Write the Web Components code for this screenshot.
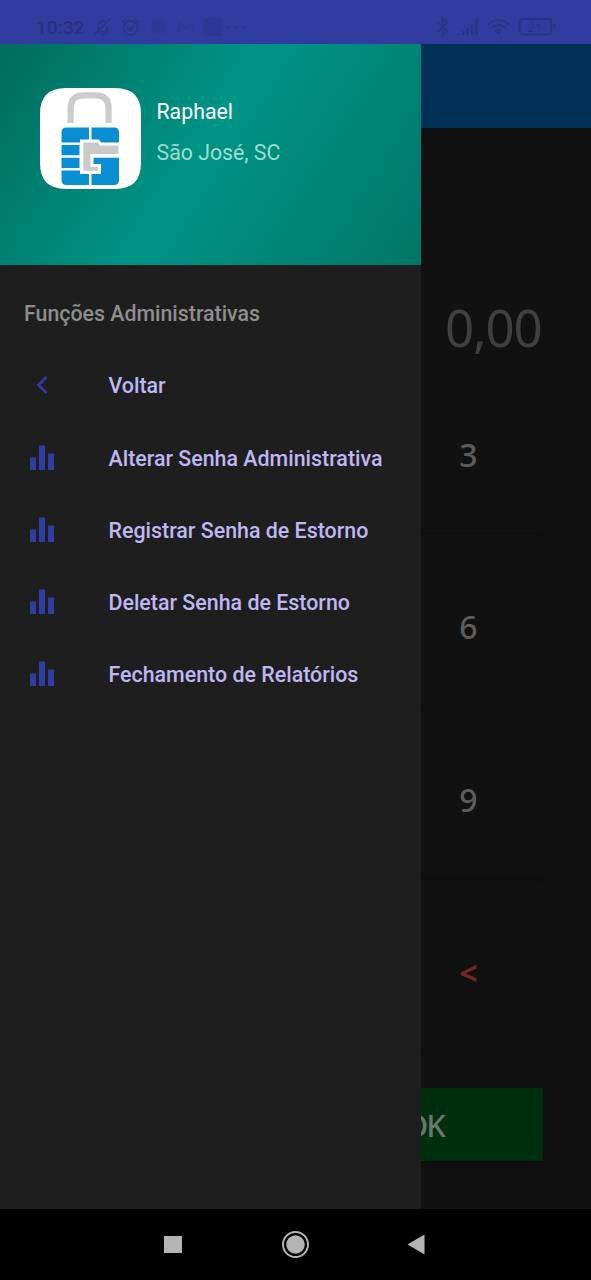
<!DOCTYPE html>
<html lang="pt-BR">
<head>
<meta charset="utf-8">
<title>Funções Administrativas</title>
<style>
html,body{margin:0;height:100%;background:#000;overflow:hidden}
body{font-family:Roboto,"Noto Sans",sans-serif}
</style>
</head>
<body>
<phone-screen></phone-screen>
<script>
const define=(name,html)=>customElements.define(name,class extends HTMLElement{
  constructor(){super();const t=document.createElement('template');t.innerHTML=html;
    this.attachShadow({mode:'open'}).append(t.content.cloneNode(true));}
});

define('status-bar',`<style>
:host{display:flex;box-sizing:border-box;height:44px;padding:10px 35px 0 36px;background:#303c9f;color:#2a3388;align-items:center;justify-content:space-between}
.g{display:flex;align-items:center}
.time{font-size:19px;font-weight:500;letter-spacing:.1px;line-height:34px;width:56px;padding-top:1px;color:#28307f}
svg{display:block}
</style>
<div class="g"><span class="time">10:32</span>
<svg width="155" height="24" viewBox="92 15 155 24" fill="none" stroke="currentColor" stroke-width="1.6">
<path d="M96 32h13M98.500 31v-5a4.500 4.500 0 0 1 8-3M107 26v6M101 34.500h4M94 35l17-17"/>
<circle cx="130.500" cy="28" r="7"/><path d="M127 27l3 3 4-4M122 23l4-4M139 23l-4-4"/>
<g stroke="none" fill="currentColor" opacity=".32"><circle cx="158" cy="27" r="7.500"/><path d="M178 22h3v10h-3zM191 22h3v10h-3zM181 22l5 5 5-5v3l-5 5-5-5z"/></g>
<rect x="203.500" y="18" width="19" height="18" rx="3" fill="currentColor" stroke="none" opacity=".48"/>
<circle cx="213" cy="27" r="4.500" stroke="#303c9f" opacity=".3"/>
<g stroke="none" fill="currentColor" opacity=".65"><circle cx="228" cy="27" r="1.300"/><circle cx="236" cy="27" r="1.300"/><circle cx="244" cy="27" r="1.300"/></g>
</svg></div>
<svg width="120" height="24" viewBox="436 15 120 24" fill="none" stroke="currentColor" stroke-width="1.500">
<path d="M438 22.500l9 9-4.500 4v-17l4.500 4-9 9"/>
<path d="M458.500 35v-2M463 35v-4M467.500 35v-7M472 35v-10M476.500 35V19" stroke-width="2.400"/>
<path d="M488 24.500q10.500-9 21 0M491.500 28q7-6 14 0M495 31q3.500-3 7 0" stroke-width="2"/><path d="M495.500 31.500h6l-3 3z" fill="currentColor" stroke="none"/>
<rect x="519.500" y="19" width="32" height="15.500" rx="4" stroke-width="2"/><path d="M554.500 24v5" stroke-width="2"/>
<text x="535.500" y="31.500" text-anchor="middle" font-family="Roboto,sans-serif" font-size="13" letter-spacing=".5" fill="currentColor" stroke="none">21</text>
</svg>`);

define('brand-logo',`<style>:host{display:block;width:101px;height:101px}svg{display:block}</style>
<svg width="101" height="101" viewBox="0 0 101 101"><path d="M0 26Q0 0 26 0h49q26 0 26 26v49q0 26-26 26H26Q0 101 0 75z" fill="#fff"/>
<path d="M30.600 35V20.300q0-13 13-13h12q13 0 13 13V35" fill="none" stroke="#ccc" stroke-width="6.200"/>
<g fill="#088fd3"><path d="M26.500 39.500H49v12h-9v3H21.500v-10q0-5 5-5zM51.500 39.500h22.500q5 0 5 5v10H61l-2-3h-7.500zM21.500 57H39.500v10.300H21.500zM21.500 69.700H39.500V80H21.500zM21.500 82.500H40V86h9v11H26.500q-5 0-5-5zM53.500 69.700H79V92q0 5-5 5H51.500V86H61V76h-7.500z"/></g>
<path d="M43.300 54.500h14.500l2 3h18.700V66h-28v12.700h7.800v4H43.300z" fill="#c9c9c9"/></svg>`);

define('drawer-header',`<style>
:host{display:flex;box-sizing:border-box;height:221px;padding:44px 0 0 39.500px;gap:16px;background:linear-gradient(122deg,#006c5e 0%,#009485 48%,#007668 100%)}
.t{display:flex;flex-direction:column;padding-top:3px;font-size:21.300px;line-height:41px}
</style><brand-logo></brand-logo><div class="t"><slot name="name"></slot><slot name="city"></slot></div>`);

define('menu-item',`<style>
:host{display:flex;height:72.250px;align-items:center;padding-left:24px;color:#bfb7f4;font-size:21.400px;font-weight:500;white-space:nowrap}
::slotted(svg),svg{display:block;width:36px;height:36px;margin-right:48.500px;flex:none}
span{padding-top:1px}
</style><slot name="icon"><svg viewBox="0 0 36 36" fill="#303c9f"><path d="M6 17.500h6V30H6zM15 5.500h6V30h-6zM24 13.500h6V30h-6z"/></svg></slot><span><slot></slot></span>`);

define('nav-drawer',`<style>
:host{display:block;background:#1e1e1e;overflow:hidden}
h2{margin:0;padding:34px 24px 0;font:500 21.350px/30px Roboto,sans-serif;color:#8e8e8e}
nav{padding-top:20.300px}
[slot=name]{color:#fff}[slot=city]{color:#9cdcd3}
</style><drawer-header><span slot="name">Raphael</span><span slot="city">São José, SC</span></drawer-header>
<h2>Funções Administrativas</h2>
<nav>
<menu-item><svg slot="icon" viewBox="0 0 36 36" fill="none" stroke="#303c9f" stroke-width="2.800"><path d="M22.500 10l-8 8 8 8"/></svg>Voltar</menu-item>
<menu-item>Alterar Senha Administrativa</menu-item>
<menu-item>Registrar Senha de Estorno</menu-item>
<menu-item>Deletar Senha de Estorno</menu-item>
<menu-item>Fechamento de Relatórios</menu-item>
</nav>`);

define('key-button',`<style>
:host{display:flex;align-items:center;justify-content:center;background:#111;box-shadow:0 2px 3px #0f0f0f;color:#5c5c5c;font:500 32px "Noto Sans",sans-serif}
</style><slot></slot>`);

define('payment-screen',`<style>
:host{display:flex;flex-direction:column;background:#111}
header{height:84px;background:#003156}
.amount{height:248px;box-sizing:border-box;padding:163px 49.500px 0;text-align:right;color:#404040;font:400 51px/72px "Noto Sans",sans-serif;letter-spacing:-1.200px}
.keys{display:grid;grid-template-columns:repeat(3,149px);grid-auto-rows:156px;gap:16.700px 24px;padding:0 48px}
.keys key-button{grid-column:3}
.actions{display:grid;grid-template-columns:238px;justify-content:end;padding:38px 48px 0}
.actions key-button{height:73px;background:#002f0e;color:#6b746d;font-size:31px;letter-spacing:-2px}
.keys .erase{color:#722823;font-weight:700}
</style><header></header><div class="amount">0,00</div>
<div class="keys"><key-button>3</key-button><key-button>6</key-button><key-button>9</key-button><key-button class="erase">&lt;</key-button></div>
<div class="actions"><key-button>OK</key-button></div>`);

define('system-nav',`<style>
:host{display:block;height:71px;background:#000}svg{display:block}
</style><svg width="591" height="71" viewBox="0 1209 591 71" fill="#b4b4b4"><path d="M164 1236h18v17h-18zM424.500 1234.500v20l-17-10z"/><circle cx="295.500" cy="1244.500" r="9.300"/><circle cx="295.500" cy="1244.500" r="12.500" fill="none" stroke="#b4b4b4" stroke-width="2"/></svg>`);

define('phone-screen',`<style>
:host{display:flex;flex-direction:column;width:591px;height:1280px}
main{flex:1;display:grid;grid-template-columns:421px 170px;grid-template-rows:100%;min-height:0}
payment-screen{grid-area:1/1/2/3}
nav-drawer{grid-area:1/1;z-index:1}
</style><status-bar></status-bar><main><payment-screen></payment-screen><nav-drawer></nav-drawer></main><system-nav></system-nav>`);
</script>
</body>
</html>
